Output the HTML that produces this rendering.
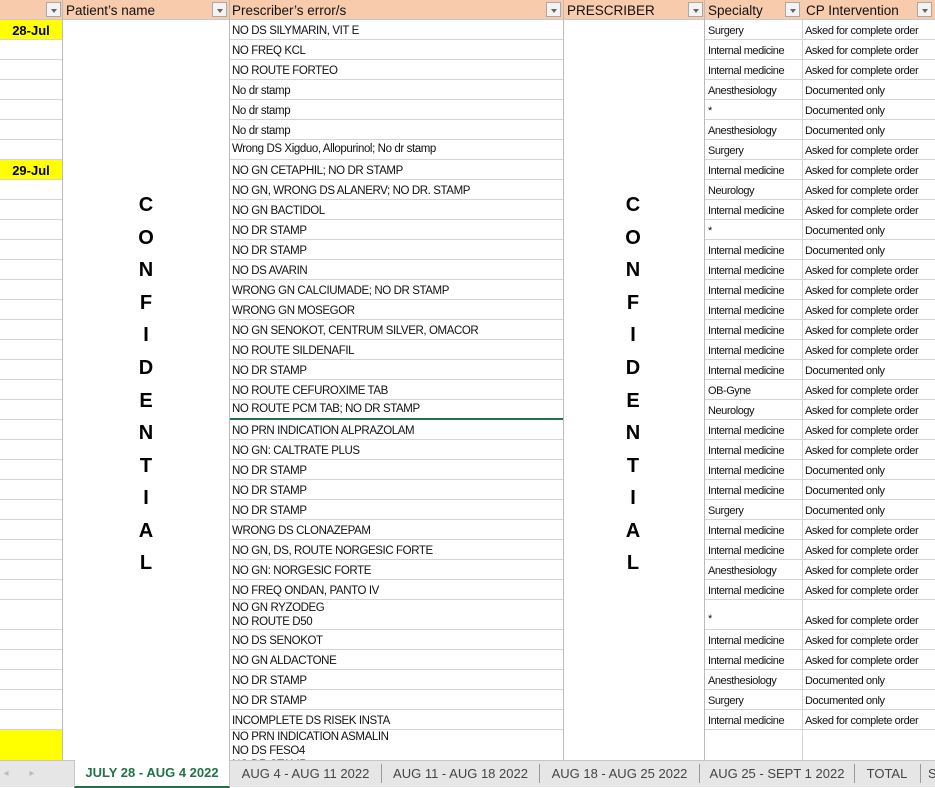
<!DOCTYPE html>
<html><head><meta charset="utf-8"><style>
*{margin:0;padding:0;box-sizing:border-box}
body{width:935px;height:787px;overflow:hidden;background:#fff;font-family:"Liberation Sans",Arial,sans-serif;position:relative}
.hd{position:absolute;top:0;left:0;width:935px;height:20px;background:#f8cbad;border-bottom:1px solid #c8c8c8}
.h{position:absolute;top:0;height:20px;line-height:21px;font-size:13.5px;color:#111}
.fb{position:absolute;top:2px;width:15px;height:15px;background:#f3f3f3;border:1px solid #a8a8a8}
.fb:after{content:"";position:absolute;left:4px;top:6px;border-left:3px solid transparent;border-right:3px solid transparent;border-top:4px solid #666}
.vl{position:absolute;top:0;width:1px;background:#c8c8c8}
.r{position:absolute;left:0;width:935px}
.a{position:absolute;left:0;width:62px;height:100%;border-bottom:1px solid #d4d4d4}
.y{background:#ffff00;font-weight:bold;font-size:13px;text-align:center;line-height:21px}
.c{position:absolute;left:230px;width:334px;height:100%;border-bottom:1px solid #d4d4d4;font-size:11.5px;letter-spacing:-0.4px;padding-left:2px;line-height:23px;color:#111;overflow:hidden;white-space:nowrap}
.e{position:absolute;left:705px;width:98px;height:100%;border-bottom:1px solid #d4d4d4;font-size:11px;letter-spacing:-0.45px;padding-left:3px;line-height:23px;color:#111}
.f{position:absolute;left:803px;width:132px;height:100%;border-bottom:1px solid #d4d4d4;font-size:11px;letter-spacing:-0.4px;padding-left:2px;line-height:23px;color:#111}
.conf{position:absolute;width:30px;text-align:center;font-weight:bold;font-size:20px;color:#000}
.tabs{position:absolute;top:760px;left:0;width:935px;height:27px;background:#e6e6e6;border-top:1px solid #c6c6c6}
.t{position:absolute;top:0;height:26px;line-height:25px;font-size:13px;color:#444;text-align:center}
.sep{position:absolute;top:3px;width:1px;height:19px;background:#999}
</style></head><body>
<div class="hd">
<div class="fb" style="left:46px"></div>
<div class="h" style="left:66px">Patient’s name</div>
<div class="fb" style="left:212px"></div>
<div class="h" style="left:232px">Prescriber’s error/s</div>
<div class="fb" style="left:546px"></div>
<div class="h" style="left:567px">PRESCRIBER</div>
<div class="fb" style="left:688px"></div>
<div class="h" style="left:708px">Specialty</div>
<div class="fb" style="left:785px"></div>
<div class="h" style="left:806px">CP Intervention</div>
<div class="fb" style="left:917px"></div>
</div>

<div id="rows">
<div class="r" style="top:20px;height:20px"><div class="a y">28-Jul</div><div class="c">NO DS SILYMARIN, VIT E</div><div class="e">Surgery</div><div class="f">Asked for complete order</div></div>
<div class="r" style="top:40px;height:20px"><div class="a"></div><div class="c">NO FREQ KCL</div><div class="e">Internal medicine</div><div class="f">Asked for complete order</div></div>
<div class="r" style="top:60px;height:20px"><div class="a"></div><div class="c">NO ROUTE FORTEO</div><div class="e">Internal medicine</div><div class="f">Asked for complete order</div></div>
<div class="r" style="top:80px;height:20px"><div class="a"></div><div class="c">No dr stamp</div><div class="e">Anesthesiology</div><div class="f">Documented only</div></div>
<div class="r" style="top:100px;height:20px"><div class="a"></div><div class="c">No dr stamp</div><div class="e">*</div><div class="f">Documented only</div></div>
<div class="r" style="top:120px;height:20px"><div class="a"></div><div class="c">No dr stamp</div><div class="e">Anesthesiology</div><div class="f">Documented only</div></div>
<div class="r" style="top:140px;height:20px"><div class="a"></div><div class="c" style="line-height:19px">Wrong DS Xigduo, Allopurinol; No dr stamp</div><div class="e">Surgery</div><div class="f">Asked for complete order</div></div>
<div class="r" style="top:160px;height:20px"><div class="a y">29-Jul</div><div class="c">NO GN CETAPHIL; NO DR STAMP</div><div class="e">Internal medicine</div><div class="f">Asked for complete order</div></div>
<div class="r" style="top:180px;height:20px"><div class="a"></div><div class="c">NO GN, WRONG DS ALANERV; NO DR. STAMP</div><div class="e">Neurology</div><div class="f">Asked for complete order</div></div>
<div class="r" style="top:200px;height:20px"><div class="a"></div><div class="c">NO GN BACTIDOL</div><div class="e">Internal medicine</div><div class="f">Asked for complete order</div></div>
<div class="r" style="top:220px;height:20px"><div class="a"></div><div class="c">NO DR STAMP</div><div class="e">*</div><div class="f">Documented only</div></div>
<div class="r" style="top:240px;height:20px"><div class="a"></div><div class="c">NO DR STAMP</div><div class="e">Internal medicine</div><div class="f">Documented only</div></div>
<div class="r" style="top:260px;height:20px"><div class="a"></div><div class="c">NO DS AVARIN</div><div class="e">Internal medicine</div><div class="f">Asked for complete order</div></div>
<div class="r" style="top:280px;height:20px"><div class="a"></div><div class="c">WRONG GN CALCIUMADE; NO DR STAMP</div><div class="e">Internal medicine</div><div class="f">Asked for complete order</div></div>
<div class="r" style="top:300px;height:20px"><div class="a"></div><div class="c">WRONG GN MOSEGOR</div><div class="e">Internal medicine</div><div class="f">Asked for complete order</div></div>
<div class="r" style="top:320px;height:20px"><div class="a"></div><div class="c">NO GN SENOKOT, CENTRUM SILVER, OMACOR</div><div class="e">Internal medicine</div><div class="f">Asked for complete order</div></div>
<div class="r" style="top:340px;height:20px"><div class="a"></div><div class="c">NO ROUTE SILDENAFIL</div><div class="e">Internal medicine</div><div class="f">Asked for complete order</div></div>
<div class="r" style="top:360px;height:20px"><div class="a"></div><div class="c">NO DR STAMP</div><div class="e">Internal medicine</div><div class="f">Documented only</div></div>
<div class="r" style="top:380px;height:20px"><div class="a"></div><div class="c">NO ROUTE CEFUROXIME TAB</div><div class="e">OB-Gyne</div><div class="f">Asked for complete order</div></div>
<div class="r" style="top:400px;height:20px"><div class="a"></div><div class="c" style="line-height:19px;border-bottom:2px solid #217346">NO ROUTE PCM TAB; NO DR STAMP</div><div class="e">Neurology</div><div class="f">Asked for complete order</div></div>
<div class="r" style="top:420px;height:20px"><div class="a"></div><div class="c">NO PRN INDICATION ALPRAZOLAM</div><div class="e">Internal medicine</div><div class="f">Asked for complete order</div></div>
<div class="r" style="top:440px;height:20px"><div class="a"></div><div class="c">NO GN: CALTRATE PLUS</div><div class="e">Internal medicine</div><div class="f">Asked for complete order</div></div>
<div class="r" style="top:460px;height:20px"><div class="a"></div><div class="c">NO DR STAMP</div><div class="e">Internal medicine</div><div class="f">Documented only</div></div>
<div class="r" style="top:480px;height:20px"><div class="a"></div><div class="c">NO DR STAMP</div><div class="e">Internal medicine</div><div class="f">Documented only</div></div>
<div class="r" style="top:500px;height:20px"><div class="a"></div><div class="c">NO DR STAMP</div><div class="e">Surgery</div><div class="f">Documented only</div></div>
<div class="r" style="top:520px;height:20px"><div class="a"></div><div class="c">WRONG DS CLONAZEPAM</div><div class="e">Internal medicine</div><div class="f">Asked for complete order</div></div>
<div class="r" style="top:540px;height:20px"><div class="a"></div><div class="c">NO GN, DS, ROUTE NORGESIC FORTE</div><div class="e">Internal medicine</div><div class="f">Asked for complete order</div></div>
<div class="r" style="top:560px;height:20px"><div class="a"></div><div class="c">NO GN: NORGESIC FORTE</div><div class="e">Anesthesiology</div><div class="f">Asked for complete order</div></div>
<div class="r" style="top:580px;height:20px"><div class="a"></div><div class="c">NO FREQ ONDAN, PANTO IV</div><div class="e">Internal medicine</div><div class="f">Asked for complete order</div></div>
<div class="r" style="top:600px;height:30px"><div class="a"></div><div class="c" style="line-height:14px;white-space:pre;padding-top:1px">NO GN RYZODEG
NO ROUTE D50</div><div class="e" style="padding-top:8px">*</div><div class="f" style="line-height:42px">Asked for complete order</div></div>
<div class="r" style="top:630px;height:20px"><div class="a"></div><div class="c">NO DS SENOKOT</div><div class="e">Internal medicine</div><div class="f">Asked for complete order</div></div>
<div class="r" style="top:650px;height:20px"><div class="a"></div><div class="c">NO GN ALDACTONE</div><div class="e">Internal medicine</div><div class="f">Asked for complete order</div></div>
<div class="r" style="top:670px;height:20px"><div class="a"></div><div class="c">NO DR STAMP</div><div class="e">Anesthesiology</div><div class="f">Documented only</div></div>
<div class="r" style="top:690px;height:20px"><div class="a"></div><div class="c">NO DR STAMP</div><div class="e">Surgery</div><div class="f">Documented only</div></div>
<div class="r" style="top:710px;height:20px"><div class="a"></div><div class="c">INCOMPLETE DS RISEK INSTA</div><div class="e">Internal medicine</div><div class="f">Asked for complete order</div></div>
<div class="r" style="top:730px;height:30px"><div class="a y" style="border:0"></div><div class="c" style="line-height:14px;white-space:pre;border:0">NO PRN INDICATION ASMALIN
NO DS FESO4
NO DR STAMP</div></div>
</div>
<div class="vl" style="left:62px;top:0;height:760px;background:#bbb"></div>
<div class="vl" style="left:229px;top:0;height:760px;background:#bbb"></div>
<div class="vl" style="left:563px;top:0;height:760px;background:#bbb"></div>
<div class="vl" style="left:704px;top:0;height:760px;background:#bbb"></div>
<div class="vl" style="left:802px;top:20px;height:740px;background:#d4d4d4"></div>

<div class="conf" style="left:131px;top:194px">C</div>
<div class="conf" style="left:131px;top:227px">O</div>
<div class="conf" style="left:131px;top:259px">N</div>
<div class="conf" style="left:131px;top:292px">F</div>
<div class="conf" style="left:131px;top:324px">I</div>
<div class="conf" style="left:131px;top:357px">D</div>
<div class="conf" style="left:131px;top:390px">E</div>
<div class="conf" style="left:131px;top:422px">N</div>
<div class="conf" style="left:131px;top:455px">T</div>
<div class="conf" style="left:131px;top:487px">I</div>
<div class="conf" style="left:131px;top:520px">A</div>
<div class="conf" style="left:131px;top:552px">L</div>

<div class="conf" style="left:618px;top:194px">C</div>
<div class="conf" style="left:618px;top:227px">O</div>
<div class="conf" style="left:618px;top:259px">N</div>
<div class="conf" style="left:618px;top:292px">F</div>
<div class="conf" style="left:618px;top:324px">I</div>
<div class="conf" style="left:618px;top:357px">D</div>
<div class="conf" style="left:618px;top:390px">E</div>
<div class="conf" style="left:618px;top:422px">N</div>
<div class="conf" style="left:618px;top:455px">T</div>
<div class="conf" style="left:618px;top:487px">I</div>
<div class="conf" style="left:618px;top:520px">A</div>
<div class="conf" style="left:618px;top:552px">L</div>

<div class="tabs">
<div class="t" style="left:0;width:12px;color:#bbb;font-size:10px">◂</div>
<div class="t" style="left:26px;width:12px;color:#bbb;font-size:10px">▸</div>
<div class="t" style="left:74px;width:156px;top:-1px;height:28px;background:#fff;color:#217346;font-weight:bold;border-bottom:2px solid #217346;border-left:1px solid #c6c6c6;border-right:1px solid #c6c6c6">JULY 28 - AUG 4 2022</div>
<div class="t" style="left:230px;width:151px">AUG 4 - AUG 11 2022</div>
<div class="sep" style="left:381px"></div>
<div class="t" style="left:382px;width:157px">AUG 11 - AUG 18 2022</div>
<div class="sep" style="left:539px"></div>
<div class="t" style="left:540px;width:159px">AUG 18 - AUG 25 2022</div>
<div class="sep" style="left:699px"></div>
<div class="t" style="left:700px;width:154px">AUG 25 - SEPT 1 2022</div>
<div class="sep" style="left:854px"></div>
<div class="t" style="left:855px;width:64px">TOTAL</div>
<div class="sep" style="left:920px"></div>
<div class="t" style="left:928px;width:20px;text-align:left">S</div>
</div>
</body></html>
